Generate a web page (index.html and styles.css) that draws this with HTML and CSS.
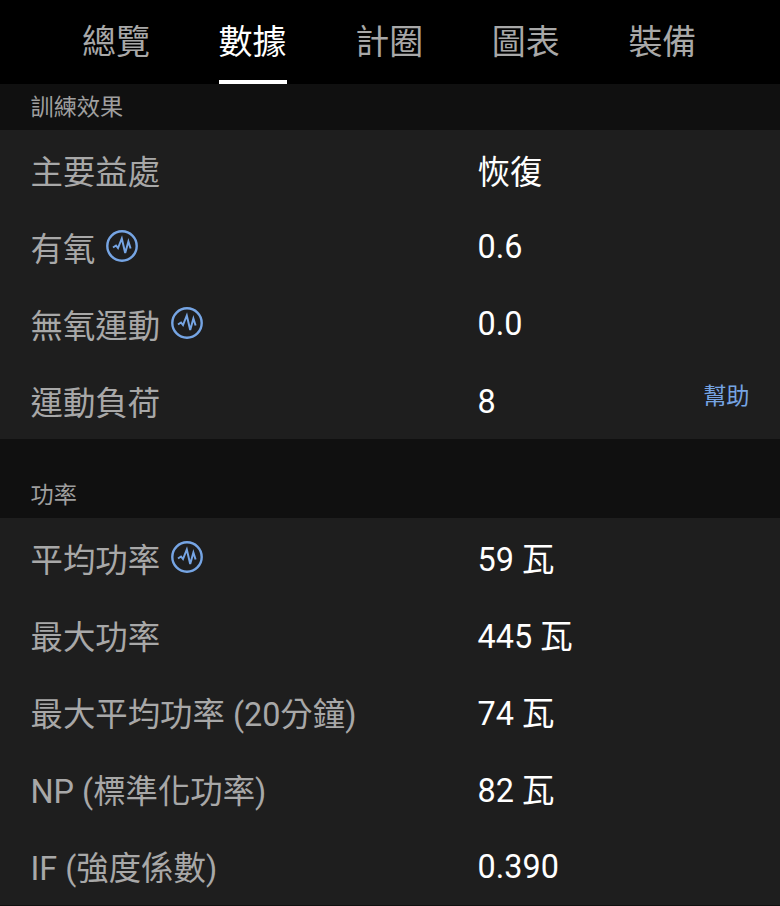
FILE: index.html
```html
<!DOCTYPE html>
<html lang="zh-Hant">
<head>
<meta charset="utf-8">
<title>活動數據</title>
<link rel="stylesheet" href="styles.css">
</head>
<body>
<svg class="defs" aria-hidden="true"><symbol id="pulse" viewBox="0 0 32 32"><circle cx="16" cy="16" r="14.7"/><path class="wave" d="M7 17.5 10 15.5 12 18 15.8 8.5 19.2 23 22.4 11.5 24.6 18.5"/></symbol></svg>
<nav class="tabs">
<a class="tab">總覽</a><a class="tab active">數據</a><a class="tab">計圈</a><a class="tab">圖表</a><a class="tab">裝備</a>
</nav>
<main>
<h2 class="heading first">訓練效果</h2>
<section class="group training">
<div class="row"><span class="label">主要益處</span><span class="value">恢復</span></div>
<div class="row"><span class="label">有氧<svg class="icon"><use href="#pulse"/></svg></span><span class="value number">0.6</span></div>
<div class="row"><span class="label">無氧運動<svg class="icon"><use href="#pulse"/></svg></span><span class="value number">0.0</span></div>
<div class="row"><span class="label">運動負荷</span><span class="value number">8</span><a class="help">幫助</a></div>
</section>
<h2 class="heading">功率</h2>
<section class="group power">
<div class="row"><span class="label">平均功率<svg class="icon"><use href="#pulse"/></svg></span><span class="value">59 瓦</span></div>
<div class="row"><span class="label">最大功率</span><span class="value">445 瓦</span></div>
<div class="row"><span class="label">最大平均功率 (20分鐘)</span><span class="value">74 瓦</span></div>
<div class="row"><span class="label">NP (標準化功率)</span><span class="value">82 瓦</span></div>
<div class="row"><span class="label">IF (強度係數)</span><span class="value number">0.390</span></div>
</section>
</main>
</body>
</html>
```
FILE: styles.css
```css
* { box-sizing: border-box; }
body { margin: 0; height: 906px; overflow: hidden; background: #101010; color: #fff; font-family: Roboto, "Noto Sans CJK TC", sans-serif; }
.defs { position: absolute; width: 0; height: 0; }
.tabs { height: 84px; background: #000; display: flex; gap: 68.6px; padding-left: 82px; }
.tab { width: 68px; height: 84px; font-size: 34px; line-height: 84px; text-align: center; color: #a8a8a8; white-space: nowrap; }
.active { color: #fff; border-bottom: 4px solid #fff; }
.heading { margin: 0; height: 79px; padding: 39px 30.5px 0; font-size: 23.2px; line-height: 34px; font-weight: 400; color: #9f9f9f; }
.first { height: 46px; padding-top: 6px; }
.group { background: #1e1e1e; padding-top: 4px; }
.training { height: 309px; }
.power { height: 387px; }
.row { height: 77.2px; display: grid; grid-template-columns: 447px 1fr auto; align-items: center; padding: 0 30.5px; font-size: 32.4px; line-height: 48px; white-space: nowrap; }
.label { display: flex; align-items: center; color: #a8a8a8; }
.icon { width: 32px; height: 32px; margin: -8px 0 0 10.5px; fill: none; stroke: #76a5e4; stroke-width: 2.4; }
.wave { stroke-width: 2; stroke-linejoin: miter; }
.power .value { margin-top: -2px; }
.group .number { margin-top: -5px; }
.help { font-size: 23.2px; color: #76a5e4; margin-top: -17px; }
```
